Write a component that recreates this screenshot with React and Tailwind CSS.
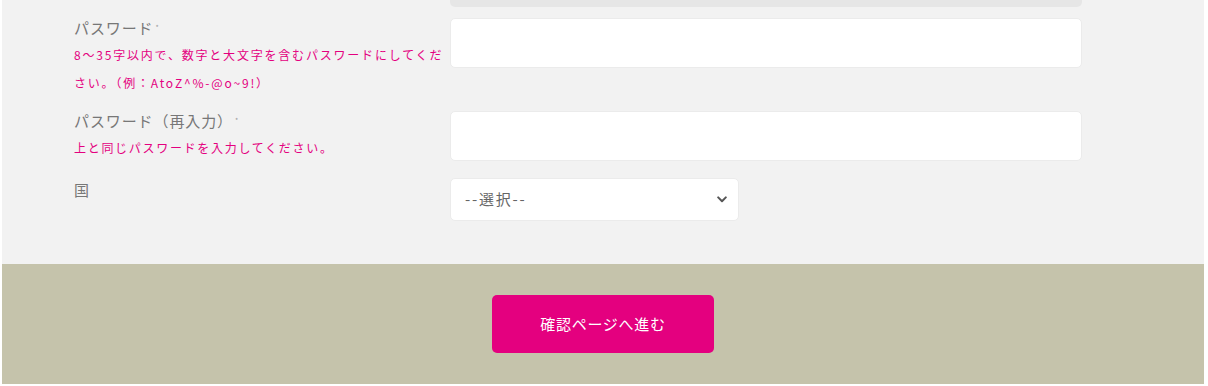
import React from "react";

const font = { fontFamily: '"Noto Sans CJK JP", "Noto Sans", sans-serif' };

function Req() {
  return <span className="relative top-[-4px] ml-[2px] text-[7px] leading-none text-[#999]">*</span>;
}

export default function App() {
  return (
    <div className="ml-[2px] w-[1202px] bg-white" style={font}>
      <div className="h-[264px] bg-[#f2f2f2] pl-[72px]">
        <div className="grid grid-cols-[376px_632px]">
          <div />
          <div className="h-[7px] rounded-b-[5px] bg-[#e6e6e6]" />
        </div>

        <div className="mt-[11px] grid grid-cols-[376px_632px]">
          <div>
            <div className="text-[15px] leading-[20px] tracking-[0.06em] text-[#777]">
              パスワード<Req />
            </div>
            <div className="mt-[3px] whitespace-nowrap text-[12px] leading-[28px] tracking-[1.8px] text-[#e4007f]">
              8～35字以内で、数字と大文字を含むパスワードにしてくだ
              <br />
              さい。（例：AtoZ^%-@o~9!）
            </div>
          </div>
          <div className="h-[50px] rounded-[5px] border border-[#ebebeb] bg-white" />
        </div>

        <div className="mt-[14px] grid grid-cols-[376px_632px]">
          <div>
            <div className="text-[15px] leading-[20px] tracking-[0.06em] text-[#777]">
              パスワード（再入力）<Req />
            </div>
            <div className="mt-[3px] text-[12px] leading-[28px] tracking-[1.7px] text-[#e4007f]">
              上と同じパスワードを入力してください。
            </div>
          </div>
          <div className="h-[50px] rounded-[5px] border border-[#ebebeb] bg-white" />
        </div>

        <div className="mt-[16px] grid grid-cols-[376px_632px]">
          <div className="pt-[2px] text-[15px] leading-[20px] text-[#777]">国</div>
          <div className="flex h-[43px] w-[289px] items-center justify-between rounded-[5px] border border-[#ebebeb] bg-white pl-[14px] pr-[11px]">
            <span className="text-[15px] tracking-[0.12em] text-[#666]">--選択--</span>
            <svg width="10" height="7" viewBox="0 0 10 7" fill="none">
              <path d="M1.2 1.4 L5 5.2 L8.8 1.4" stroke="#555" strokeWidth="2" strokeLinecap="round" strokeLinejoin="round" />
            </svg>
          </div>
        </div>
      </div>

      <div className="flex h-[120px] justify-center bg-[#c5c3ab] pt-[31px]">
        <button className="flex h-[58px] w-[222px] items-center justify-center rounded-[5px] bg-[#e4007f] text-[15px] tracking-[0.05em] text-white">
          確認ページへ進む
        </button>
      </div>
    </div>
  );
}
